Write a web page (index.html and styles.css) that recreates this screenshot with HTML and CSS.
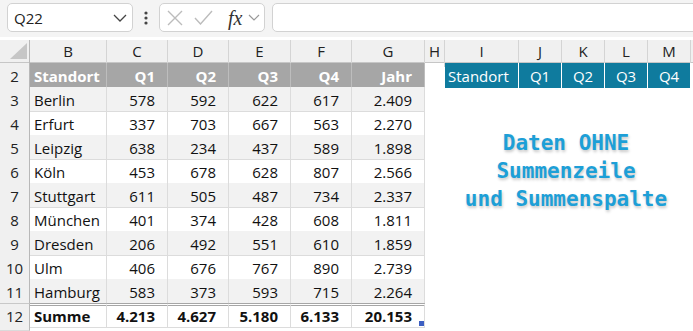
FILE: index.html
```html
<!DOCTYPE html>
<html lang="de">
<head>
  <meta charset="UTF-8" />
  <title>Tabelle</title>
  <link rel="stylesheet" href="styles.css">
</head>
<body>

  <div class="toolbar">
    <div class="namebox">
      <span>Q22</span>
      <svg width="14" height="8" viewBox="0 0 14 8"><polyline points="1,1 7,7 13,1" fill="none" stroke="#444" stroke-width="1.3"/></svg>
    </div>
    <div class="dots">
      <svg width="4" height="14" viewBox="0 0 4 14"><circle cx="2" cy="2" r="1.6" fill="#444"/><circle cx="2" cy="7" r="1.6" fill="#444"/><circle cx="2" cy="12" r="1.6" fill="#444"/></svg>
    </div>
    <div class="fxbox">
      <svg class="x" width="16" height="16" viewBox="0 0 16 16"><path d="M1 1 L15 15 M15 1 L1 15" stroke="#bcbcbc" stroke-width="1.4"/></svg>
      <svg class="ok" width="19" height="15" viewBox="0 0 19 15"><polyline points="1,8 6.5,14 18,1" fill="none" stroke="#bcbcbc" stroke-width="1.4"/></svg>
      <span class="fx">fx</span>
      <svg width="12" height="7" viewBox="0 0 12 7"><polyline points="1,1 6,6 11,1" fill="none" stroke="#999" stroke-width="1.2"/></svg>
    </div>
    <div class="formula"></div>
  </div>

  <div class="sheet">
    <div class="row head">
      <div class="corner"><svg width="29" height="22" viewBox="0 0 29 22"><polygon points="10,19 27,19 27,3" fill="#c6c6c6"/></svg></div>
      <div>B</div><div>C</div><div>D</div><div>E</div><div>F</div><div>G</div>
      <div>H</div><div>I</div><div>J</div><div>K</div><div>L</div><div>M</div><div></div>
    </div>

    <div class="row">
      <div class="rh">2</div>
      <div class="c th l">Standort</div><div class="c th">Q1</div><div class="c th">Q2</div><div class="c th">Q3</div><div class="c th">Q4</div><div class="c th">Jahr</div>
      <div></div>
      <div class="tl l">Standort</div><div class="tl">Q1</div><div class="tl">Q2</div><div class="tl">Q3</div><div class="tl">Q4</div>
    </div>

    <div class="row odd">
      <div class="rh">3</div>
      <div class="c l">Berlin</div><div class="c">578</div><div class="c">592</div><div class="c">622</div><div class="c">617</div><div class="c">2.409</div>
    </div>
    <div class="row">
      <div class="rh">4</div>
      <div class="c l">Erfurt</div><div class="c">337</div><div class="c">703</div><div class="c">667</div><div class="c">563</div><div class="c">2.270</div>
    </div>
    <div class="row odd">
      <div class="rh">5</div>
      <div class="c l">Leipzig</div><div class="c">638</div><div class="c">234</div><div class="c">437</div><div class="c">589</div><div class="c">1.898</div>
    </div>
    <div class="row">
      <div class="rh">6</div>
      <div class="c l">Köln</div><div class="c">453</div><div class="c">678</div><div class="c">628</div><div class="c">807</div><div class="c">2.566</div>
    </div>
    <div class="row odd">
      <div class="rh">7</div>
      <div class="c l">Stuttgart</div><div class="c">611</div><div class="c">505</div><div class="c">487</div><div class="c">734</div><div class="c">2.337</div>
    </div>
    <div class="row">
      <div class="rh">8</div>
      <div class="c l">München</div><div class="c">401</div><div class="c">374</div><div class="c">428</div><div class="c">608</div><div class="c">1.811</div>
    </div>
    <div class="row odd">
      <div class="rh">9</div>
      <div class="c l">Dresden</div><div class="c">206</div><div class="c">492</div><div class="c">551</div><div class="c">610</div><div class="c">1.859</div>
    </div>
    <div class="row">
      <div class="rh">10</div>
      <div class="c l">Ulm</div><div class="c">406</div><div class="c">676</div><div class="c">767</div><div class="c">890</div><div class="c">2.739</div>
    </div>
    <div class="row odd">
      <div class="rh">11</div>
      <div class="c l">Hamburg</div><div class="c">583</div><div class="c">373</div><div class="c">593</div><div class="c">715</div><div class="c">2.264</div>
    </div>
    <div class="row total">
      <div class="rh">12</div>
      <div class="c l">Summe</div><div class="c">4.213</div><div class="c">4.627</div><div class="c">5.180</div><div class="c">6.133</div><div class="c last">20.153<span class="handle"></span></div>
    </div>
    <div class="row stub">
      <div class="rh"></div>
    </div>

    <div class="note">Daten OHNE<br>Summenzeile<br>und Summenspalte</div>
  </div>

</body>
</html>
```

FILE: styles.css
```css
* {
  margin: 0;
  padding: 0;
  box-sizing: border-box;
}

html, body {
  width: 100%;
  height: 100%;
  overflow: hidden;
  background: #fff;
  font-family: "Open Sans", Arial, sans-serif;
  font-size: 15px;
  color: #111;
}

/* formula bar */
.toolbar {
  display: flex;
  align-items: flex-start;
  height: 37px;
  padding: 3px 0 0 7px;
  background: #f4f4f4;
}

.namebox,
.fxbox,
.formula {
  height: 29px;
  background: #fff;
  border: 1px solid #d2d2d2;
  border-radius: 5px;
  display: flex;
  align-items: center;
}

.namebox {
  width: 126px;
  padding: 0 5px 0 6px;
  justify-content: space-between;
  color: #222;
}

.dots {
  width: 26px;
  height: 29px;
  display: flex;
  align-items: center;
  justify-content: center;
}

.fxbox {
  width: 106px;
  padding-left: 7px;
}

.fxbox .ok {
  margin-left: 11px;
}

.fx {
  margin-left: 15px;
  margin-right: 6px;
  font-family: "Liberation Serif", serif;
  font-style: italic;
  font-size: 20px;
  line-height: 20px;
  color: #333;
}

.formula {
  flex: 1;
  margin-left: 7px;
  margin-right: -10px;
}

/* grid */
.sheet {
  position: relative;
  margin-top: 3px;
}

.row {
  display: grid;
  grid-template-columns: 30px 77px 61px 61px 62px 61px 73px 20px 74px 43px 43px 43px 43px 30px;
  height: 24px;
}

.row.stub {
  height: 4px;
}

.head {
  height: 23px;
  background: #f0f0f0;
  border-bottom: 1px solid #c6c6c6;
}

.head div {
  border-right: 1px solid #d4d4d4;
  text-align: center;
  line-height: 22px;
  color: #222;
}

.head .corner {
  border-right: 1px solid #b8b8b8;
}

.rh {
  background: #f0f0f0;
  border-right: 1px solid #b8b8b8;
  border-bottom: 1px solid #dadada;
  text-align: center;
  padding-top: 2px;
  line-height: 22px;
  color: #222;
}

.c {
  position: relative;
  text-align: right;
  padding: 2px 12px 0 4px;
  line-height: 22px;
  border-right: 1px solid #dcdcdc;
  border-bottom: 1px solid #dcdcdc;
  white-space: nowrap;
}

.c.l {
  text-align: left;
}

.odd .c {
  background: #f2f2f2;
}

.c.th {
  background: #a6a6a6;
  color: #fff;
  font-weight: bold;
  border-right-color: #bdbdbd;
}

.tl {
  background: #0f7b9e;
  color: #fff;
  text-align: center;
  padding-top: 2px;
  line-height: 22px;
  border-right: 1px solid #fff;
}

.tl.l {
  text-align: left;
  padding-left: 3px;
}

.total .c {
  font-weight: bold;
  border-top: 3px double #a6a6a6;
  padding-top: 0;
  line-height: 20px;
}

.total .rh {
  border-top: 1px solid #c8c8c8;
  padding-top: 1px;
}

.handle {
  position: absolute;
  right: 0;
  bottom: 1px;
  width: 5px;
  height: 5px;
  background: #3d5fc2;
}

.note {
  position: absolute;
  left: 445px;
  top: 89px;
  width: 242px;
  text-align: center;
  font-family: "DejaVu Sans Mono", monospace;
  font-weight: bold;
  font-size: 21px;
  line-height: 28px;
  color: #1d9fd7;
  text-shadow: 1px 2px 3px rgba(0, 0, 0, 0.22);
}
```
